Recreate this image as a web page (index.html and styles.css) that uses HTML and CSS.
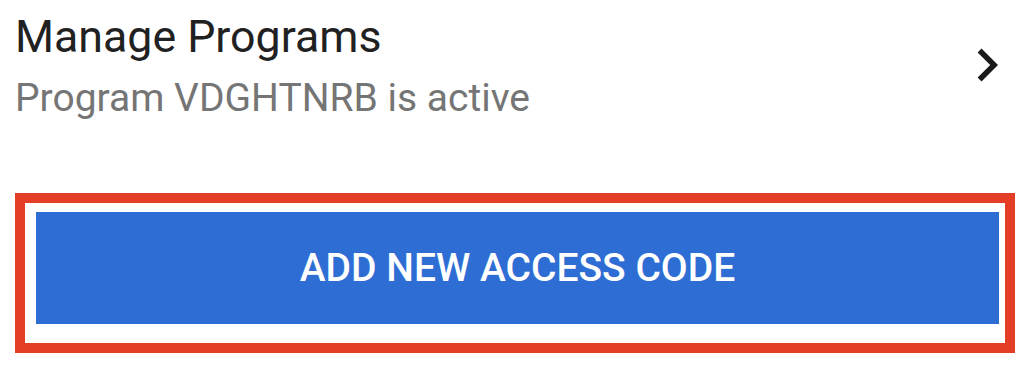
FILE: index.html
```
<!DOCTYPE html>
<html>
<head>
<meta charset="utf-8">
<link rel="stylesheet" href="styles.css">
</head>
<body>
<div class="page">
  <div class="item">
    <div class="texts">
      <div class="title">Manage Programs</div>
      <div class="subtitle">Program VDGHTNRB is active</div>
    </div>
    <svg class="chev" viewBox="0 0 24 24" width="66" height="66" aria-hidden="true">
      <path d="M10 6 8.59 7.41 13.17 12l-4.58 4.59L10 18l6-6z" fill="#1a1a1a"/>
    </svg>
  </div>
  <div class="highlight">
    <button class="btn">ADD NEW ACCESS CODE</button>
  </div>
</div>
</body>
</html>
```
FILE: styles.css
```
html, body {
  margin: 0;
  padding: 0;
  background: #ffffff;
}
body {
  font-family: Roboto, "Liberation Sans", sans-serif;
  width: 1029px;
  height: 368px;
  overflow: hidden;
}
.page {
  display: flex;
  flex-direction: column;
}
.item {
  display: flex;
  align-items: center;
  justify-content: space-between;
  padding: 7px 9px 0 15px;
}
.texts {
  display: flex;
  flex-direction: column;
}
.title {
  font-size: 44.7px;
  line-height: 60px;
  color: #212121;
}
.subtitle {
  font-size: 39px;
  line-height: 50px;
  margin-top: 6px;
  color: #757575;
}
.chev {
  display: block;
  margin-top: -1px;
}
.highlight {
  box-sizing: border-box;
  width: 1000px;
  margin: 70px 0 0 15px;
  border: 10px solid #e53e27;
  padding: 9px 6px 19px 11px;
}
.btn {
  display: block;
  width: 100%;
  height: 112px;
  border: none;
  margin: 0;
  padding: 0;
  background: #2e6dd4;
  color: #ffffff;
  font-family: Roboto, "Liberation Sans", sans-serif;
  font-weight: 500;
  font-size: 39px;
  letter-spacing: 0;
  text-align: center;
}
```
